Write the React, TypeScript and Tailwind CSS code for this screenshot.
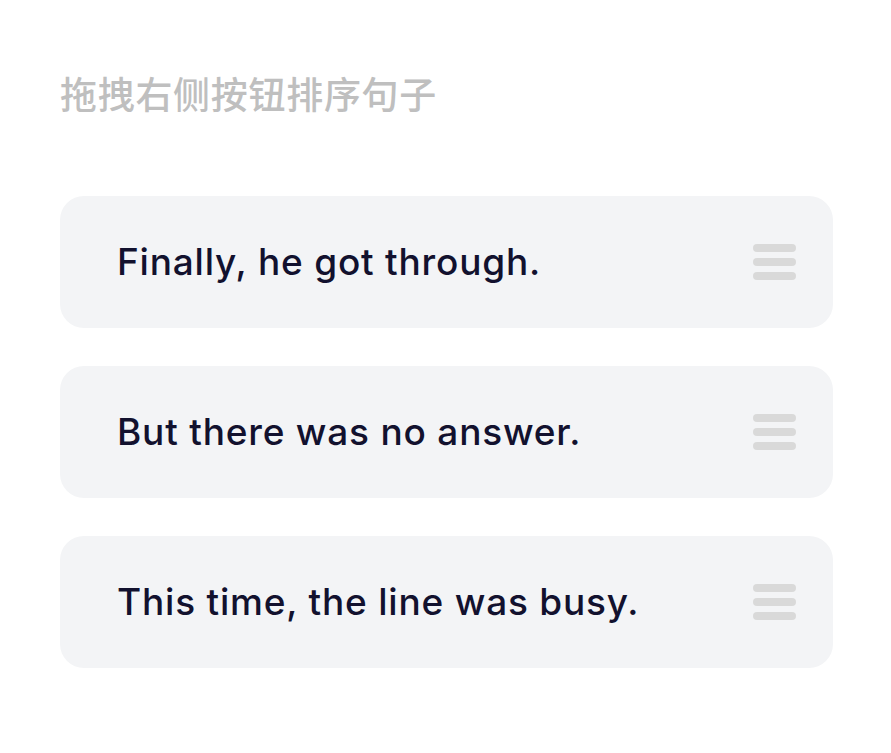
const sentences = ['Finally, he got through.', 'But there was no answer.', 'This time, the line was busy.']

const Handle = () => (
  <div className="flex flex-col gap-[6px] w-[43px]">
    <span className="block h-[8px] rounded-full bg-[#d9d9d9]" />
    <span className="block h-[8px] rounded-full bg-[#d9d9d9]" />
    <span className="block h-[8px] rounded-full bg-[#d9d9d9]" />
  </div>
)

export default function App() {
  return (
    <div className="min-h-[753px] bg-white px-[60px] pt-[72px]" style={{ fontFamily: 'Inter, "Noto Sans CJK SC", sans-serif' }}>
      <h1 className="text-[37px] leading-[48px] font-medium text-[#bfbfbf] tracking-[0.7px]">拖拽右侧按钮排序句子</h1>
      <div className="mt-[76px] flex flex-col gap-[38px] w-[773px]">
        {sentences.map((s, i) => (
          <div key={i} className="h-[132px] rounded-[24px] bg-[#f3f4f6] flex items-center justify-between pl-[57px] pr-[37px]">
            <span className="text-[37px] font-medium text-[#12112e] tracking-[0.8px]">{s}</span>
            <Handle />
          </div>
        ))}
      </div>
    </div>
  )
}
